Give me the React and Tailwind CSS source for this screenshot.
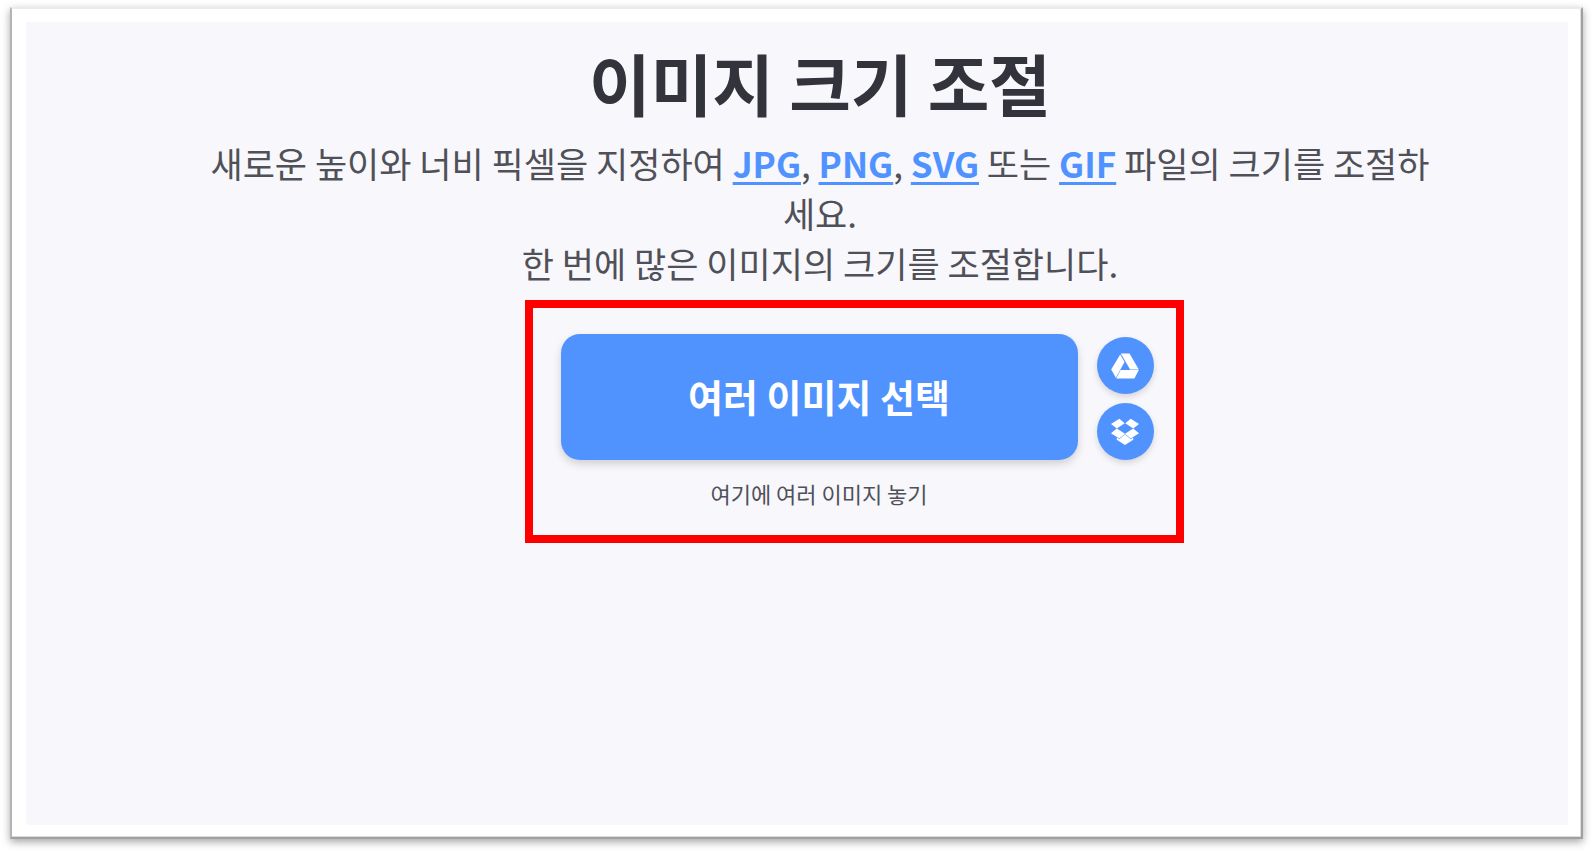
const formats = {
  jpg: { label: 'JPG', href: '#jpg' },
  png: { label: 'PNG', href: '#png' },
  svg: { label: 'SVG', href: '#svg' },
  gif: { label: 'GIF', href: '#gif' },
};

function FormatLink({ format }) {
  return (
    <a
      href={format.href}
      className="font-bold text-[#5093ff] underline decoration-[3px] underline-offset-[4px]"
    >
      {format.label}
    </a>
  );
}

function SourceButton({ label, children }) {
  return (
    <button
      type="button"
      aria-label={label}
      className="flex h-[57px] w-[57px] items-center justify-center rounded-full bg-[#5093ff] text-white shadow-[0_3px_6px_rgba(0,0,0,0.14)]"
    >
      {children}
    </button>
  );
}

function DriveIcon() {
  return (
    <svg className="h-7 w-7" viewBox="0 0 28 28" fill="currentColor">
      <path d="M9.800 1.500h8.700l9.300 15.900h-8.700z" />
      <path d="M9.200 2.500 13.500 10 4.900 25.700 0.200 17.500z" />
      <path d="M9.600 18h18.200L23.400 26.500H5.200z" />
    </svg>
  );
}

function DropboxIcon() {
  return (
    <svg className="h-7 w-7" viewBox="0 0 28 28" fill="currentColor">
      <path d="M8.300 0.800 13.700 5.200 5.800 10.600 0 6z" />
      <path d="M19.700 0.800 14.300 5.200 22.200 10.600 28 6z" />
      <path d="M5.800 10.400 14 15.700 8.300 20.600 0 15.200z" />
      <path d="M22.200 10.400 14 15.700 19.700 20.600 28 15.200z" />
      <path d="M14 16.300 19.700 21.200 22.200 19.500V21.700L14 26.900 5.800 21.700V19.500L8.300 21.200z" />
    </svg>
  );
}

export default function App() {
  return (
    <div className="flex min-h-screen bg-white pt-[7px] pr-[11px] pb-[14px] pl-[10px] font-['Noto_Sans_CJK_KR',sans-serif]">
      <div className="flex flex-1 border-2 border-t-[#ebebeb] border-r-[#a0a0a0] border-b-[#a0a0a0] border-l-[#b4b4b4] bg-white pt-[13px] pr-[13px] pb-3 pl-[14px] shadow-[0_3px_8px_rgba(0,0,0,0.35),inset_-1px_-1px_0_#dcdcdc]">
        <main className="flex flex-1 flex-col items-center bg-[#f7f7fc] pt-5 pl-[46px] text-center">
          <h1 className="text-[67px] leading-[80px] font-bold text-[#33333b]">이미지 크기 조절</h1>

          <p className="mt-4 max-w-[1240px] text-[35px] leading-[50px] text-[#505058]">
            새로운 높이와 너비 픽셀을 지정하여 <FormatLink format={formats.jpg} />
            {', '}
            <FormatLink format={formats.png} />
            {', '}
            <FormatLink format={formats.svg} /> 또는 <FormatLink format={formats.gif} /> 파일의 크기를 조절하세요.
            <br />한 번에 많은 이미지의 크기를 조절합니다.
          </p>

          <section className="mt-3 ml-[68px] flex gap-[19px] border-8 border-[#ff0000] pt-[26px] pr-[22px] pb-[25px] pl-[28px]">
            <div className="flex flex-col">
              <button
                type="button"
                className="h-[126px] w-[517px] rounded-[19px] bg-[#5093ff] pb-1 text-[38px] font-bold text-white shadow-[0_4px_8px_rgba(0,0,0,0.16)]"
              >
                여러 이미지 선택
              </button>
              <p className="mt-4 text-[22px] leading-[34px] text-[#505058]">여기에 여러 이미지 놓기</p>
            </div>
            <div className="flex flex-col gap-[9px] pt-[3px]">
              <SourceButton label="Google Drive">
                <DriveIcon />
              </SourceButton>
              <SourceButton label="Dropbox">
                <DropboxIcon />
              </SourceButton>
            </div>
          </section>
        </main>
      </div>
    </div>
  );
}
